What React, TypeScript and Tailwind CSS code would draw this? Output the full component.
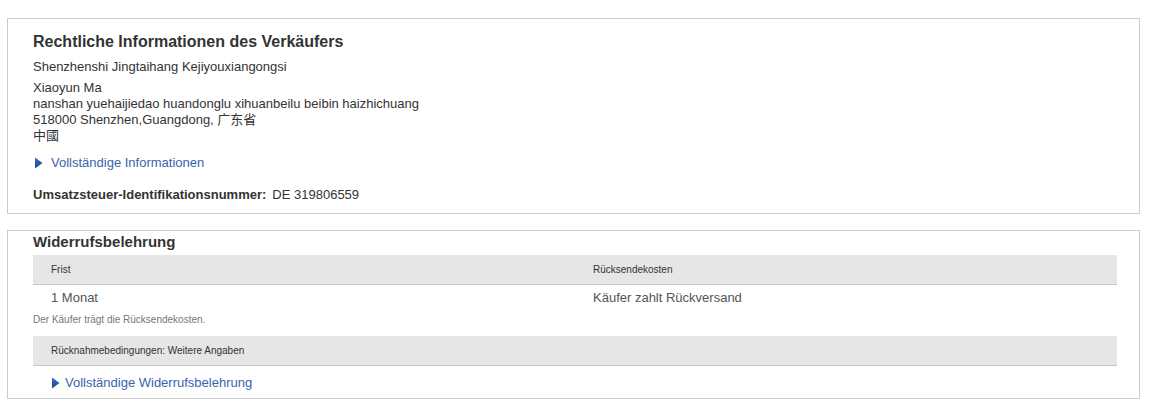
import React from "react";

function Tri() {
  return (
    <svg width="8" height="12" viewBox="0 0 8 12" className="shrink-0">
      <defs>
        <linearGradient id="tg" x1="0" y1="0" x2="0" y2="1">
          <stop offset="0" stopColor="#3b6cc0" />
          <stop offset="1" stopColor="#1a4791" />
        </linearGradient>
      </defs>
      <path d="M0 0.5 L7.5 6 L0 11.5 Z" fill="url(#tg)" />
    </svg>
  );
}

export default function App() {
  return (
    <div
      className="bg-white w-[1150px] h-[407px] pl-[7px] pr-[10px] pt-[18px] text-[#333]"
      style={{ fontFamily: '"Liberation Sans", Arial, "Noto Sans CJK SC", sans-serif' }}
    >
      <div className="border border-[#cccccc] pl-[25px] pr-[22px] pt-[13px] pb-[10px]">
        <h2 className="text-[16px] leading-[20px] font-bold text-[#333]">
          Rechtliche Informationen des Verkäufers
        </h2>
        <div className="mt-[7px] text-[13px] leading-[16px]">
          Shenzhenshi Jingtaihang Kejiyouxiangongsi
        </div>
        <div className="mt-[5px] text-[13px] leading-[16px]">
          <div>Xiaoyun Ma</div>
          <div>nanshan yuehaijiedao huandonglu xihuanbeilu beibin haizhichuang</div>
          <div>518000 Shenzhen,Guangdong, 广东省</div>
          <div>中國</div>
        </div>
        <div className="mt-[11px] flex items-center h-[16px] pl-[2px]">
          <Tri />
          <span className="ml-[8px] text-[13px] leading-[16px] text-[#3a63ad]">
            Vollständige Informationen
          </span>
        </div>
        <div className="mt-[16px] text-[13px] leading-[16px]">
          <span className="font-bold">Umsatzsteuer-Identifikationsnummer:</span>
          <span className="ml-[6px]">DE 319806559</span>
        </div>
      </div>

      <div className="mt-[16px] border border-[#cccccc] pl-[25px] pr-[22px] pt-[2px] pb-[7px]">
        <h2 className="text-[15px] leading-[18px] font-bold text-[#333]">Widerrufsbelehrung</h2>
        <div className="mt-[4px]">
          <div className="grid grid-cols-2 bg-[#e6e6e6] border-b border-[#c8c8c8] h-[30px] items-center text-[10px] leading-[12px] text-[#333]">
            <div className="pl-[18px]">Frist</div>
            <div className="pl-[18px]">Rücksendekosten</div>
          </div>
          <div className="grid grid-cols-2 text-[13px] leading-[16px] text-[#555] pt-[5px] h-[29px]">
            <div className="pl-[18px]">1 Monat</div>
            <div className="pl-[18px]">Käufer zahlt Rückversand</div>
          </div>
          <div className="text-[10px] leading-[12px] text-[#777] h-[22px]">
            Der Käufer trägt die Rücksendekosten.
          </div>
          <div className="bg-[#e6e6e6] border-b border-[#c8c8c8] h-[30px] flex items-center pl-[18px] text-[10px] leading-[12px] text-[#333]">
            Rücknahmebedingungen: Weitere Angaben
          </div>
          <div className="mt-[9px] flex items-center h-[16px] pl-[19px]">
            <Tri />
            <span className="ml-[5px] text-[13px] leading-[16px] text-[#3a63ad]">
              Vollständige Widerrufsbelehrung
            </span>
          </div>
        </div>
      </div>
    </div>
  );
}
